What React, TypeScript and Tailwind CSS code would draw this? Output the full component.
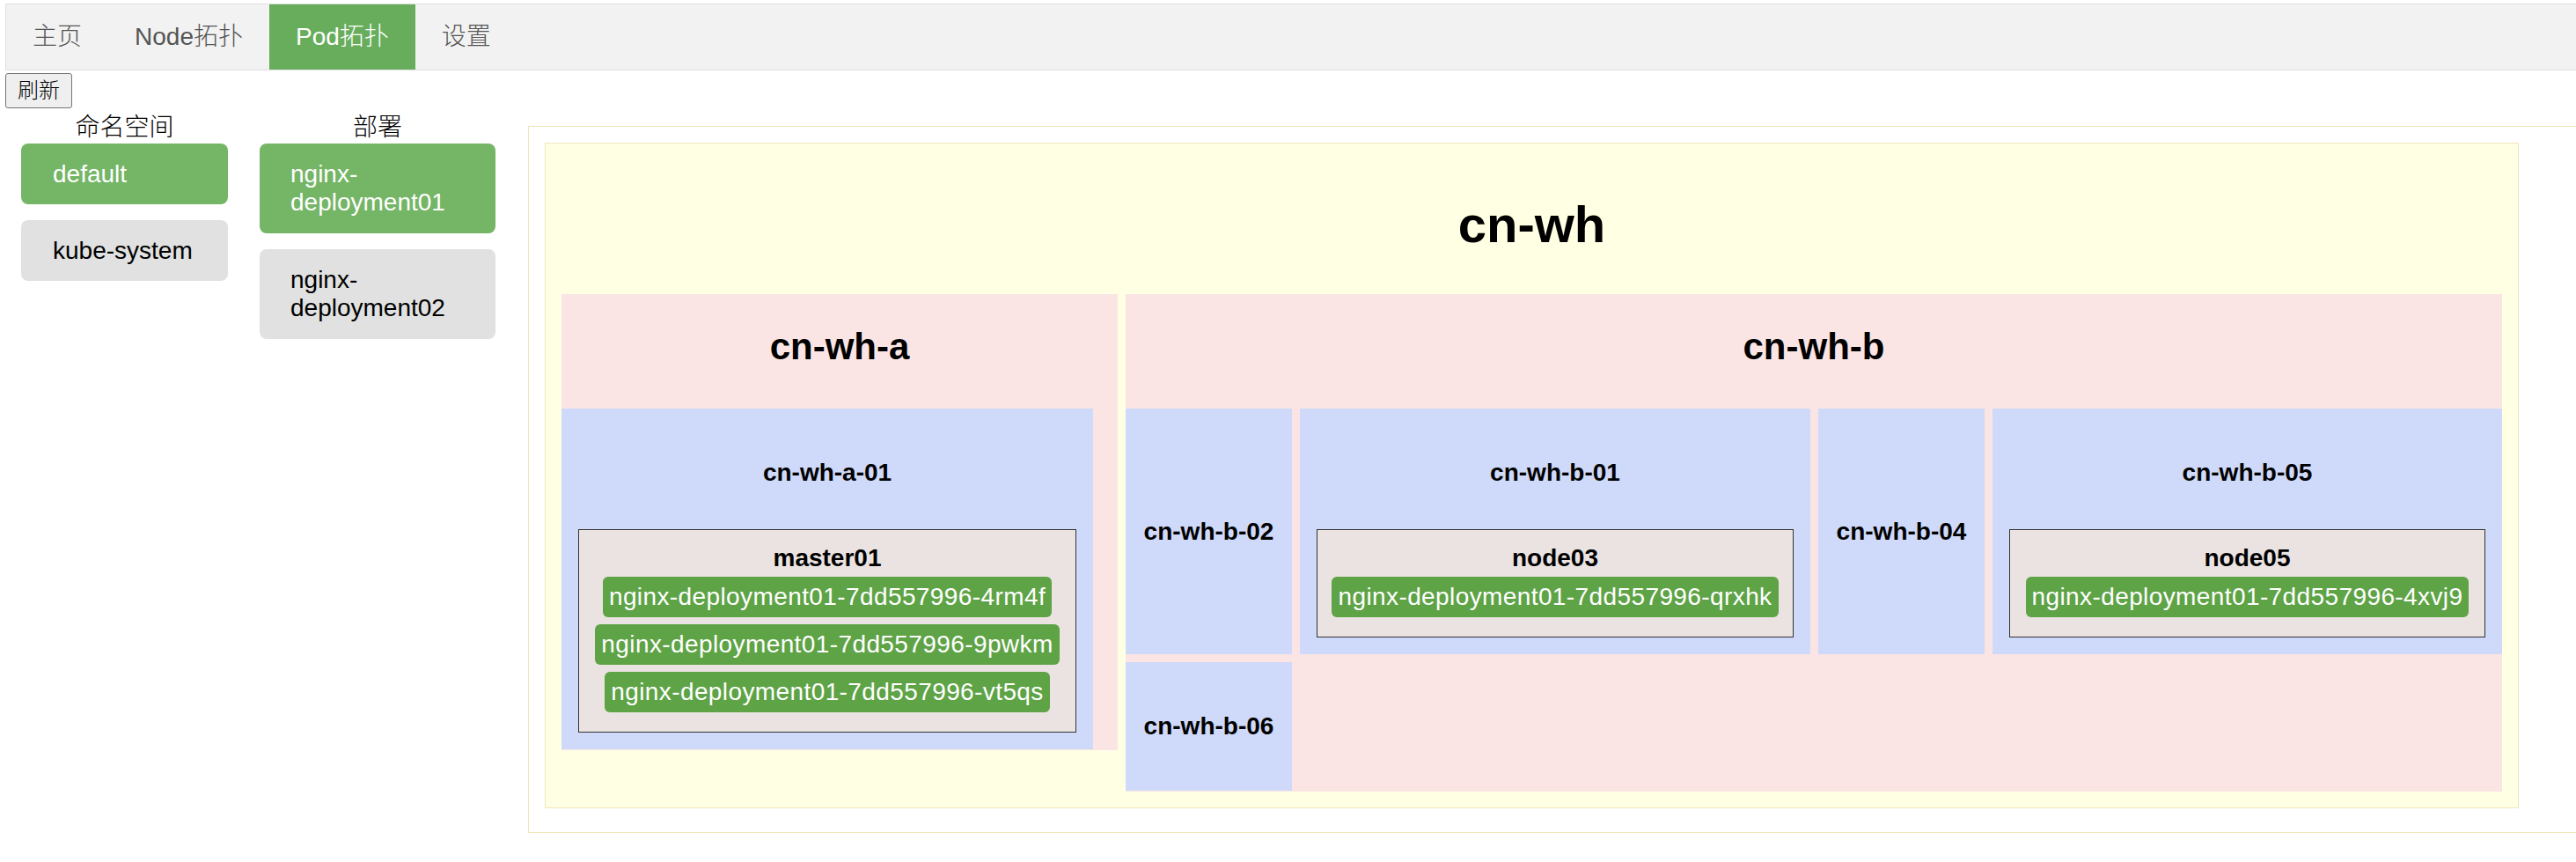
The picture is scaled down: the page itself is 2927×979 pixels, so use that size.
import React from 'react';
import { clsx } from 'clsx';

interface NodeInfo {
  name: string;
  pods: string[];
}

interface Rack {
  name: string;
  nodes?: NodeInfo[];
  className?: string;
}

interface Zone {
  name: string;
  width: string;
  cols: string;
  racks: Rack[];
}

const tabs = ['主页', 'Node拓扑', 'Pod拓扑', '设置'];
const namespaces = ['default', 'kube-system'];
const deployments = ['nginx-deployment01', 'nginx-deployment02'];

const zones: Zone[] = [
  {
    name: 'cn-wh-a',
    width: 'w-[632px]',
    cols: 'grid-cols-[604px]',
    racks: [
      {
        name: 'cn-wh-a-01',
        nodes: [
          {
            name: 'master01',
            pods: [
              'nginx-deployment01-7dd557996-4rm4f',
              'nginx-deployment01-7dd557996-9pwkm',
              'nginx-deployment01-7dd557996-vt5qs',
            ],
          },
        ],
      },
    ],
  },
  {
    name: 'cn-wh-b',
    width: 'w-[1564px]',
    cols: 'grid-cols-[189px_580px_189px_579px]',
    racks: [
      { name: 'cn-wh-b-02' },
      { name: 'cn-wh-b-01', nodes: [{ name: 'node03', pods: ['nginx-deployment01-7dd557996-qrxhk'] }] },
      { name: 'cn-wh-b-04' },
      { name: 'cn-wh-b-05', nodes: [{ name: 'node05', pods: ['nginx-deployment01-7dd557996-4xvj9'] }] },
      { name: 'cn-wh-b-06', className: 'h-[146px]' },
    ],
  },
];

function NodeBox({ node }: { node: NodeInfo }) {
  return (
    <div className="mx-[19px] mt-[48px] mb-[19px] border border-[#333] bg-[#ebe3e2] pt-[16px] pb-[22px] text-center">
      <div className="text-[28px] font-bold leading-[32px]">{node.name}</div>
      <div className="mt-[5px] flex flex-col items-center gap-[8px]">
        {node.pods.map((pod) => (
          <span
            key={pod}
            className="rounded-[6px] bg-[#5ea346] px-[7px] py-[7px] text-[28px] leading-[32px] tracking-[0.4px] text-white"
          >
            {pod}
          </span>
        ))}
      </div>
    </div>
  );
}

function RackBox({ rack }: { rack: Rack }) {
  if (!rack.nodes) {
    return (
      <div className={clsx('flex items-center justify-center bg-[#cfd9f9] text-[28px] font-bold leading-[32px]', rack.className)}>
        {rack.name}
      </div>
    );
  }
  return (
    <div className="bg-[#cfd9f9] text-center">
      <div className="mt-[57px] text-[28px] font-bold leading-[32px]">{rack.name}</div>
      {rack.nodes.map((n) => (
        <NodeBox key={n.name} node={n} />
      ))}
    </div>
  );
}

export default function App() {
  return (
    <div className="min-h-screen bg-white text-black font-['Liberation_Sans','Noto_Sans_CJK_SC',sans-serif]">
      {/* top tabs */}
      <div className="ml-[6px] mt-[4px] flex h-[76px] border-y border-l border-[#e0e0e0] bg-[#f2f2f2]">
        {tabs.map((t) => (
          <div
            key={t}
            className={clsx(
              'flex items-center px-[30px] text-[28px] font-light',
              t === 'Pod拓扑' ? 'bg-[#67ad5c] text-white' : 'text-[#555]'
            )}
          >
            {t}
          </div>
        ))}
      </div>

      <button className="ml-[6px] mt-[3px] h-[40px] w-[76px] rounded-[3px] border border-[#767676] bg-[#efefef] text-[24px] font-light leading-none">
        刷新
      </button>

      <div className="mt-[6px] flex items-start">
        <div className="ml-[24px] flex gap-[36px]">
          <div className="w-[235px]">
            <div className="text-center text-[28px] font-light leading-[32px]">命名空间</div>
            <div className="mt-[2px] flex flex-col gap-[18px]">
              {namespaces.map((ns, i) => (
                <div
                  key={ns}
                  className={clsx(
                    'rounded-[8px] px-[36px] py-[18.5px] text-[28px] leading-[32px]',
                    i === 0 ? 'bg-[#74b566] text-white' : 'bg-[#e1e1e1] text-black'
                  )}
                >
                  {ns}
                </div>
              ))}
            </div>
          </div>
          <div className="w-[268px]">
            <div className="text-center text-[28px] font-light leading-[32px]">部署</div>
            <div className="mt-[2px] flex flex-col gap-[18px]">
              {deployments.map((d, i) => (
                <div
                  key={d}
                  className={clsx(
                    'rounded-[8px] px-[35px] py-[19px] text-[28px] leading-[32px]',
                    i === 0 ? 'bg-[#74b566] text-white' : 'bg-[#e1e1e1] text-black'
                  )}
                >
                  {d}
                </div>
              ))}
            </div>
          </div>
        </div>

        {/* topology */}
        <div className="ml-[37px] mt-[14px] flex-1 border-y border-l border-[#f1e5bb] pl-[18px] pt-[18px] pb-[27px]">
          <div className="w-fit border border-[#f1e5bb] bg-[#ffffe4] px-[18px] pb-[18px]">
            <div className="mt-[59px] mb-[46px] text-center text-[58px] font-bold leading-[66px]">cn-wh</div>
            <div className="flex items-start gap-[9px]">
              {zones.map((z) => (
                <div key={z.name} className={clsx('bg-[#fae5e4] pb-[1px]', z.width)}>
                  <div className="pt-[36px] pb-[46px] text-center text-[42px] font-bold leading-[48px]">{z.name}</div>
                  <div className={clsx('grid gap-[9px]', z.cols)}>
                    {z.racks.map((r) => (
                      <RackBox key={r.name} rack={r} />
                    ))}
                  </div>
                </div>
              ))}
            </div>
          </div>
        </div>
      </div>
    </div>
  );
}
